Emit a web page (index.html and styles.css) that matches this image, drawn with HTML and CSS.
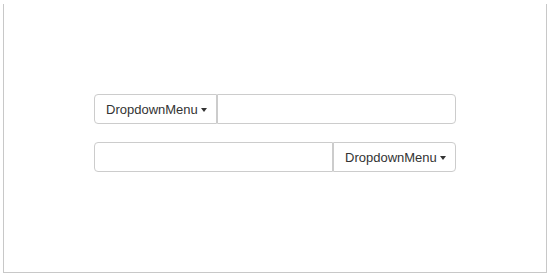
FILE: index.html
```html
<!DOCTYPE html>
<html>
<head>
<meta charset="utf-8">
<link rel="stylesheet" href="styles.css">
</head>
<body>
<div class="frame">
  <div class="stack">
    <div class="input-group">
      <button class="btn">DropdownMenu <span class="caret"></span></button>
      <input class="field field-right" type="text">
    </div>
    <div class="input-group">
      <input class="field field-left" type="text">
      <button class="btn btn-right">DropdownMenu <span class="caret"></span></button>
    </div>
  </div>
</div>
</body>
</html>
```
FILE: styles.css
```css
html, body {
  margin: 0;
  padding: 0;
  background: #fff;
}
.frame {
  margin: 4px 3px 0 3px;
  height: 269px;
  border: 1px solid #c8c8c8;
  border-top: none;
  box-sizing: border-box;
  display: flex;
  justify-content: center;
}
.stack {
  padding-top: 90px;
  width: 362px;
  display: flex;
  flex-direction: column;
  gap: 18px;
}
.input-group {
  display: flex;
  height: 30px;
}
.btn {
  box-sizing: border-box;
  width: 123px;
  height: 30px;
  flex: none;
  background: #fff;
  border: 1px solid #ccc;
  border-radius: 4px 0 0 4px;
  font-family: "Liberation Sans", Arial, sans-serif;
  font-size: 13px;
  color: #333;
  padding: 0 0 0 11px;
  display: flex;
  align-items: center;
  justify-content: flex-start;
  gap: 3px;
}
.btn-right {
  border-radius: 0 4px 4px 0;
}
.caret {
  width: 0;
  height: 0;
  border-left: 3.5px solid transparent;
  border-right: 3.5px solid transparent;
  border-top: 4px solid #333;
  margin-top: 1px;
}
.field {
  flex: 1;
  min-width: 0;
  box-sizing: border-box;
  height: 30px;
  border: 1px solid #ccc;
  margin: 0;
  padding: 0 10px;
  outline: none;
  font-family: "Liberation Sans", Arial, sans-serif;
  font-size: 13px;
}
.field-right {
  border-radius: 0 4px 4px 0;
}
.field-left {
  border-radius: 4px 0 0 4px;
}
```
